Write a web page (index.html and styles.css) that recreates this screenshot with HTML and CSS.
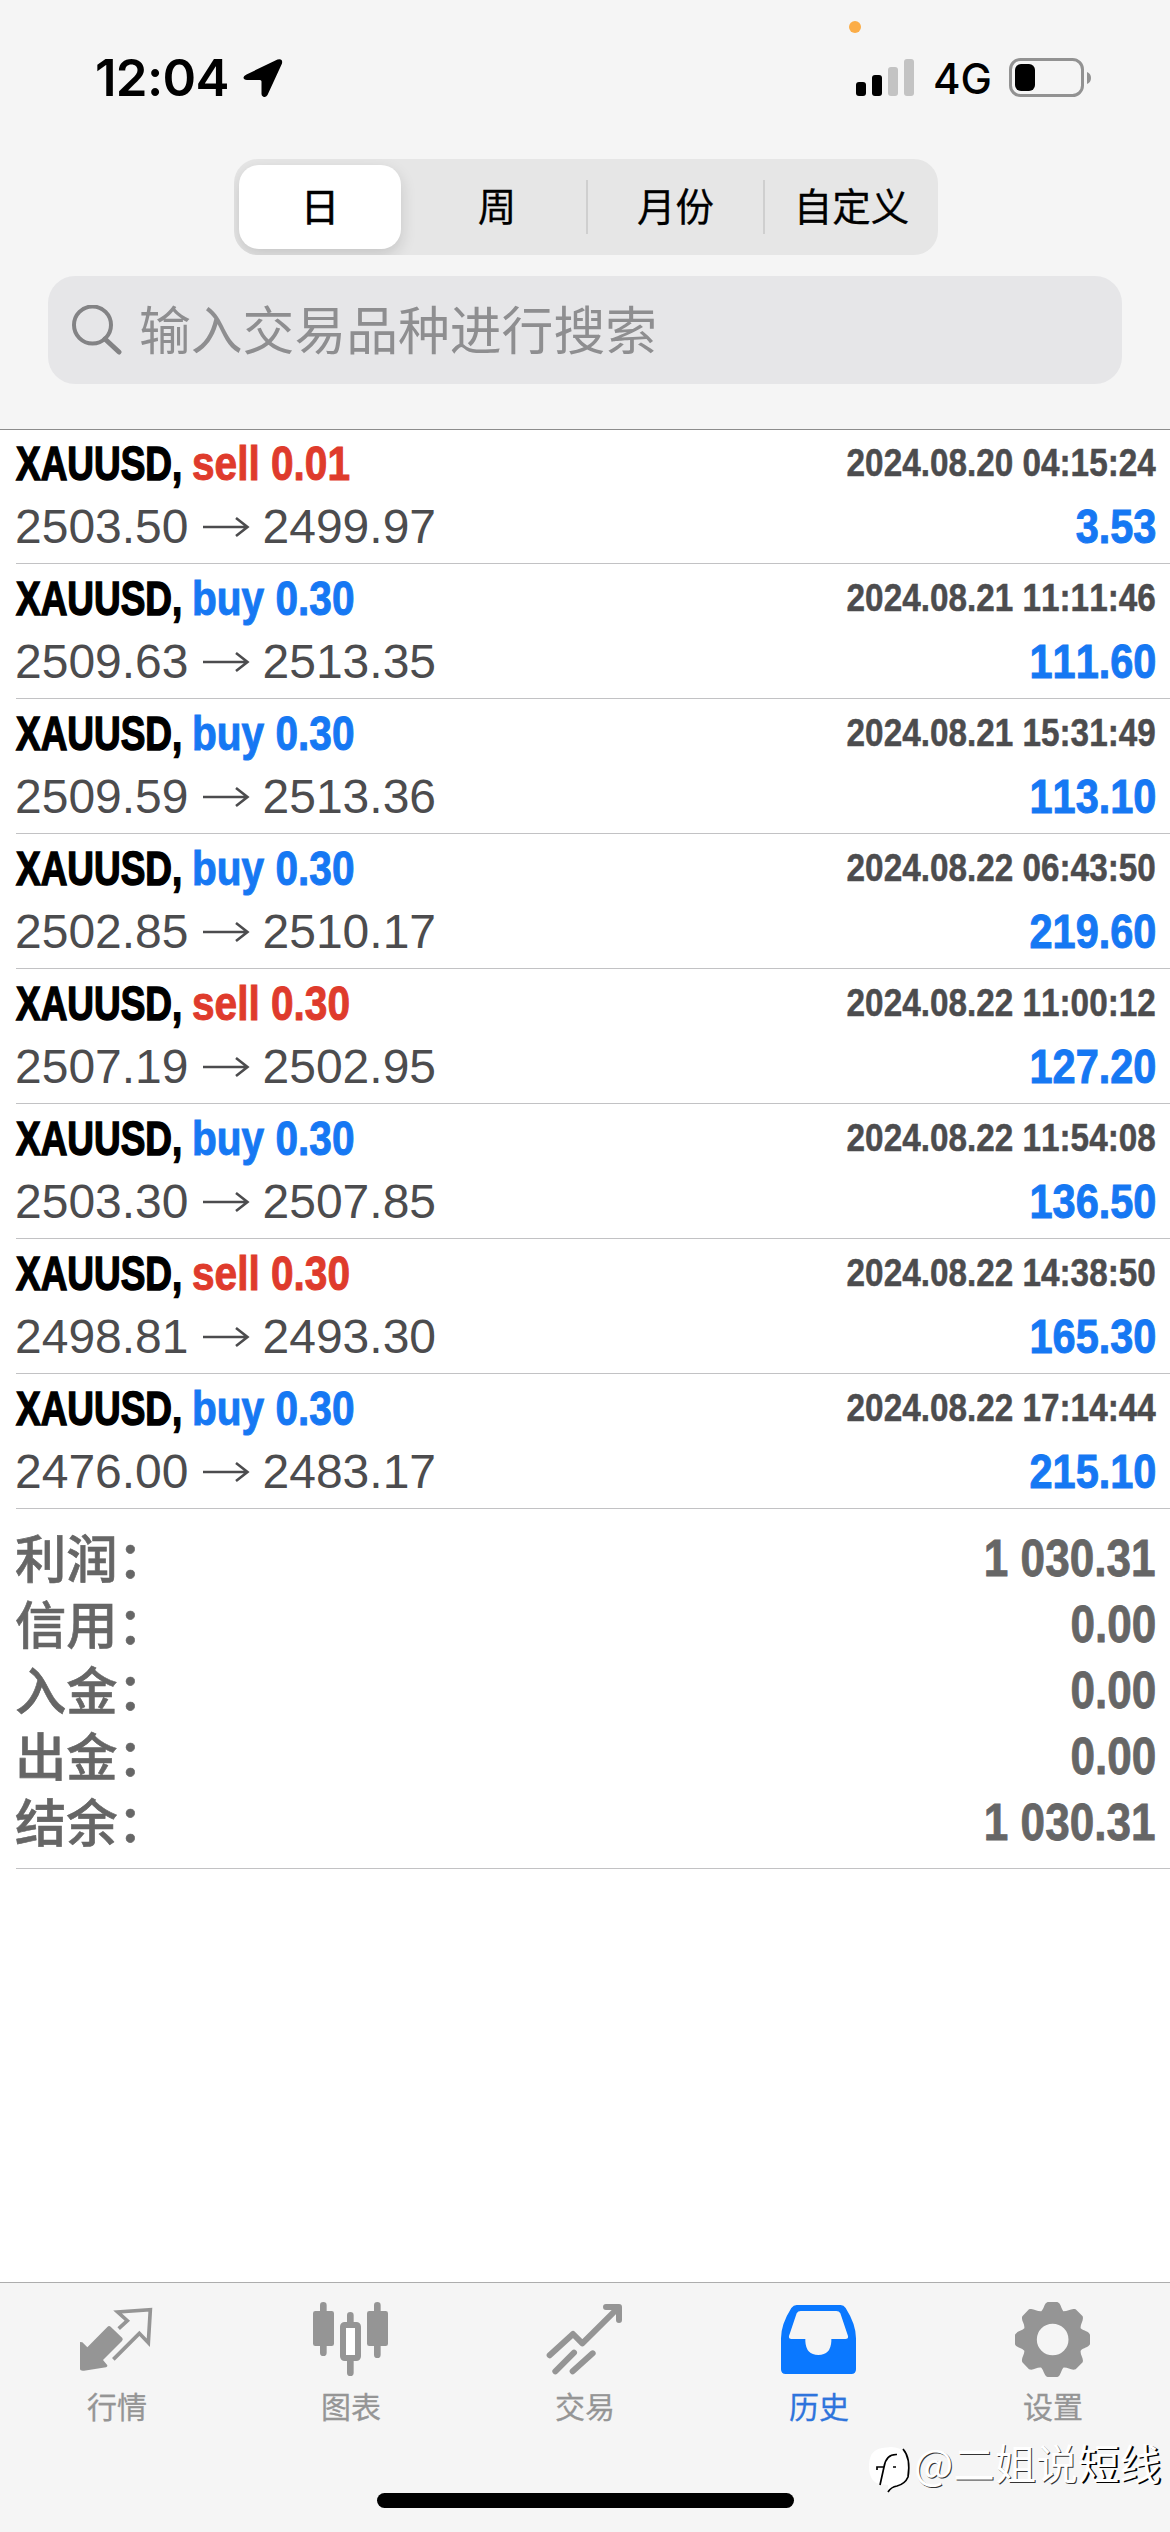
FILE: index.html
```html
<!DOCTYPE html>
<html lang="zh-CN">
<head>
<meta charset="utf-8">
<title>历史</title>
<link rel="stylesheet" href="styles.css">
</head>
<body>
<svg width="0" height="0" class="defs"><defs>
<symbol id="arrow" viewBox="0 0 48 24"><path d="M1 12H45M34 3L45.500 12L34 21" fill="none" stroke="#4c4c4e" stroke-width="2.600"/></symbol>
</defs></svg>
<div class="screen">
  <header class="top">
    <div class="status">
      <span class="rec-dot"></span>
      <span class="time">12:04</span>
      <svg class="loc" viewBox="0 0 40 40"><path d="M3.500 16.500L34.500 1.500Q40 0 39 5.500L24.500 37Q22.500 40 20 38.500Q18.500 37.500 18.500 36V23.500Q18.500 22 17 22H4Q.5 21.500 .5 19.500Q.5 18 3.500 16.500Z"/></svg>
      <svg class="signal" viewBox="0 0 58 38"><rect x="0" y="23" width="10" height="14" rx="3"/><rect x="16" y="16" width="10" height="21" rx="3"/><rect x="32" y="8" width="10" height="29" rx="3" fill="#c3c3c3"/><rect x="48" y="0" width="10" height="37" rx="3" fill="#c3c3c3"/></svg>
      <span class="net">4G</span>
      <svg class="battery" viewBox="0 0 83 40"><rect x="1.500" y="1.500" width="72" height="36" rx="10" fill="none" stroke="#929292" stroke-width="3"/><rect x="6" y="6" width="20" height="27" rx="6"/><path d="M78 14Q82 15.500 82 20T78 26Z" fill="#929292"/></svg>
    </div>
    <div class="segments">
      <div class="seg active">日</div>
      <div class="seg">周</div>
      <div class="seg ruled">月份</div>
      <div class="seg ruled">自定义</div>
    </div>
    <div class="search">
      <svg viewBox="0 0 50 50"><ellipse cx="20.500" cy="20" rx="18.500" ry="18.500" fill="none" stroke="#838385" stroke-width="4"/><path d="M33 34L47 47" stroke="#838385" stroke-width="5" stroke-linecap="round"/></svg>
      <span>输入交易品种进行搜索</span>
    </div>
  </header>

  <main>
    <ul class="deals">
      <li class="deal"><div class="line"><b class="sym">XAUUSD,</b><b class="act sell">sell 0.01</b><time>2024.08.20 04:15:24</time></div><div class="line prices"><span>2503.50</span><svg><use href="#arrow"/></svg><span>2499.97</span><b class="profit">3.53</b></div></li>
      <li class="deal"><div class="line"><b class="sym">XAUUSD,</b><b class="act buy">buy 0.30</b><time>2024.08.21 11:11:46</time></div><div class="line prices"><span>2509.63</span><svg><use href="#arrow"/></svg><span>2513.35</span><b class="profit">111.60</b></div></li>
      <li class="deal"><div class="line"><b class="sym">XAUUSD,</b><b class="act buy">buy 0.30</b><time>2024.08.21 15:31:49</time></div><div class="line prices"><span>2509.59</span><svg><use href="#arrow"/></svg><span>2513.36</span><b class="profit">113.10</b></div></li>
      <li class="deal"><div class="line"><b class="sym">XAUUSD,</b><b class="act buy">buy 0.30</b><time>2024.08.22 06:43:50</time></div><div class="line prices"><span>2502.85</span><svg><use href="#arrow"/></svg><span>2510.17</span><b class="profit">219.60</b></div></li>
      <li class="deal"><div class="line"><b class="sym">XAUUSD,</b><b class="act sell">sell 0.30</b><time>2024.08.22 11:00:12</time></div><div class="line prices"><span>2507.19</span><svg><use href="#arrow"/></svg><span>2502.95</span><b class="profit">127.20</b></div></li>
      <li class="deal"><div class="line"><b class="sym">XAUUSD,</b><b class="act buy">buy 0.30</b><time>2024.08.22 11:54:08</time></div><div class="line prices"><span>2503.30</span><svg><use href="#arrow"/></svg><span>2507.85</span><b class="profit">136.50</b></div></li>
      <li class="deal"><div class="line"><b class="sym">XAUUSD,</b><b class="act sell">sell 0.30</b><time>2024.08.22 14:38:50</time></div><div class="line prices"><span>2498.81</span><svg><use href="#arrow"/></svg><span>2493.30</span><b class="profit">165.30</b></div></li>
      <li class="deal"><div class="line"><b class="sym">XAUUSD,</b><b class="act buy">buy 0.30</b><time>2024.08.22 17:14:44</time></div><div class="line prices"><span>2476.00</span><svg><use href="#arrow"/></svg><span>2483.17</span><b class="profit">215.10</b></div></li>
    </ul>
    <dl class="summary">
      <div><dt>利润：</dt><dd>1 030.31</dd></div>
      <div><dt>信用：</dt><dd>0.00</dd></div>
      <div><dt>入金：</dt><dd>0.00</dd></div>
      <div><dt>出金：</dt><dd>0.00</dd></div>
      <div><dt>结余：</dt><dd>1 030.31</dd></div>
    </dl>
  </main>

  <footer class="bottom">
    <nav class="tabs">
      <a class="tab"><svg viewBox="234 120 234 234"><path d="M240 246L247 247L262 262L322 201Q327 195 332 200L367 234Q370 238 366 243L309 300L322 316Q323 320 318 322L252 332Q240 333 240 328Z"/><path d="M356 206L382 182L353 156L451 149L445 248L418 220L340 298" fill="none" stroke="currentColor" stroke-width="11"/></svg><span>行情</span></a>
      <a class="tab"><svg viewBox="936 120 234 234"><path d="M970 136V278M1132 136V284M1051 166V190M1051 300V338" stroke="currentColor" stroke-width="20" stroke-linecap="round"/><rect x="939" y="153" width="63" height="105" rx="7"/><rect x="1101" y="153" width="63" height="105" rx="7"/><rect x="1029" y="195" width="45" height="99" rx="5" fill="#fff" stroke="currentColor" stroke-width="18"/></svg><span>图表</span></a>
      <a class="tab"><svg viewBox="288 120 234 234"><path d="M299 286L369 222L397 250L505 143M468 141H507V180M316 334L372 278M368 334L428 280" fill="none" stroke="currentColor" stroke-width="18" stroke-linecap="round" stroke-linejoin="round"/></svg><span>交易</span></a>
      <a class="tab current"><svg viewBox="90 120 234 234"><path fill-rule="evenodd" d="M140 135H272Q281 135 287 144Q318 193 318 235V328Q318 342 304 342H107Q93 342 93 328V235Q93 193 124 144Q131 135 140 135ZM152 153Q144 153 140 160L117 228Q115 237 125 237H166V244Q168 285 205 285Q242 285 244 244V237H286Q296 237 294 228L271 160Q267 153 259 153Z"/></svg><span>历史</span></a>
      <a class="tab"><svg viewBox="792 120 234 234"><path fill-rule="evenodd" d="M893 126H922C933 130 933 145 940 154C954 154 965 143 977 148L998 169C1002 183 990 192 992 205C1002 214 1016 213 1020 224V253C1015 263 1000 263 992 272C990 287 1002 294 998 307L977 328C964 333 953 321 940 323C932 333 932 348 922 351H893C882 347 882 332 874 323C860 321 850 333 837 328L817 307C812 294 824 285 823 272C814 263 799 263 795 253V224C800 214 815 213 823 205C825 191 812 182 817 169L837 148C850 143 860 155 874 154C883 145 882 130 893 126ZM908 191A47 47 0 1 0 908 286A47 47 0 1 0 908 191Z"/></svg><span>设置</span></a>
    </nav>
    <div class="home"></div>
  </footer>
  <div class="mark"><svg viewBox="0 0 46 48"><path d="M14 2Q1 4 1 20T12 38L20 39L20 46Q25 41 31 40Q42 37 42 20Q41 2 23 1Z" fill="#fff"/><path d="M29 8.500Q18 8 16 21L12 39M9 24V21H16M25 21H28M35 3Q43 12 40 31Q37 38 29 40Q23 41 20 46" fill="none" stroke="#000" stroke-width="1.700"/></svg><span>@二姐说<em>短线</em></span></div>
</div>
</body>
</html>
```
FILE: styles.css
```css
* { box-sizing: border-box; margin: 0; padding: 0; }
body { background: #fff; font-family: "Liberation Sans", "Noto Sans CJK SC", sans-serif; color: #000; font-kerning: none; }
.defs { position: absolute; }
.screen { position: relative; width: 1170px; height: 2532px; overflow: hidden; display: flex; flex-direction: column; background: #fff; }

.top { height: 430px; background: #f5f5f5; border-bottom: 1px solid #8c8c8c; }
.status { position: relative; height: 159px; padding: 58px 78px 0 95px; display: flex; align-items: flex-start; }
.rec-dot { position: absolute; left: 849px; top: 21px; width: 12px; height: 12px; border-radius: 50%; background: #fbad48; }
.time { width: 148px; font: 600 51px/40px Inter, sans-serif; letter-spacing: -.7px; white-space: nowrap; }
.loc { width: 40px; height: 40px; }
.signal { width: 58px; height: 38px; margin: 1px 19px 0 573px; }
.net { width: 76px; font: 500 42px/42px Inter, sans-serif; }
.battery { width: 83px; height: 40px; }

.segments { width: 704px; height: 96px; margin: 0 0 0 234px; border-radius: 24px; background: #e6e6e6; display: grid; grid-template-columns: 174px 178px 177px 175px; align-items: center; overflow: hidden; }
.seg { text-align: center; height: 54px; font: 400 38.500px/48px "Noto Sans CJK SC", sans-serif; -webkit-text-stroke: .3px #000; }
.seg.active { height: 84px; margin: 0 7px 0 5px; line-height: 78px; -webkit-text-stroke: .7px #000; background: #fff; border-radius: 20px; box-shadow: 0 6px 16px rgba(0,0,0,.14); }
.seg.ruled { border-left: 2px solid #cfcfcf; }

.search { height: 108px; margin: 21px 48px 0; padding-left: 24px; border-radius: 27px; background: #e6e6e8; display: flex; align-items: center; gap: 17px; font: 400 51.800px/60px "Noto Sans CJK SC", sans-serif; color: #8e8e90; }
.search svg { width: 50px; height: 50px; }
.search span { margin-top: -4px; }

.deals { list-style: none; padding-left: 16px; }
.deal { height: 135px; padding-top: 1px; border-bottom: 1px solid #c2c2c4; }
.deal:first-child { height: 134px; padding-top: 0; }
.line { height: 66px; padding-right: 14px; display: flex; align-items: center; white-space: nowrap; font-size: 48.500px; line-height: 66px; }
.sym { width: 176px; transform: scaleX(.762); transform-origin: 0 50%; -webkit-text-stroke: 1.500px currentColor; }
.act { transform: scaleX(.837); transform-origin: 0 50%; -webkit-text-stroke: 1px currentColor; }
.sell { color: #df3b2c; }
.buy { color: #1678f3; }
time { margin-left: auto; font-size: 39.500px; line-height: 62px; padding-bottom: 2px; font-weight: 700; color: #4c4c4e; -webkit-text-stroke: .5px currentColor; transform: scaleX(.843); transform-origin: 100% 50%; }
.prices { height: 62px; font-size: 48px; line-height: 62px; color: #4c4c4e; }
.prices span:first-child { margin-left: -1px; }
.prices svg { width: 48px; height: 24px; margin: 0 13px; }
.profit { margin-left: auto; padding-bottom: 3px; color: #1678f3; font-size: 48.500px; -webkit-text-stroke: 1px currentColor; transform: scaleX(.855); transform-origin: 100% 50%; }

.summary { margin-left: 16px; padding: 17px 14px 12px 0; height: 360px; border-bottom: 1px solid #c2c2c4; color: #666; font-weight: 700; }
.summary div { height: 66px; display: flex; justify-content: space-between; }
.summary dt { font: 500 51.300px/60px "Noto Sans CJK SC", sans-serif; margin-left: -1px; -webkit-text-stroke: .6px currentColor; }
.summary dd { font-size: 51px; line-height: 66px; -webkit-text-stroke: .8px currentColor; transform: scaleX(.865); transform-origin: 100% 50%; }

.bottom { margin-top: auto; height: 250px; background: #f5f5f5; border-top: 1px solid #adadad; }
.tabs { height: 210px; display: grid; grid-template-columns: repeat(5, 1fr); }
.tab { display: flex; flex-direction: column; align-items: center; padding-top: 17px; color: #959595; }
.tab svg { width: 78px; height: 78px; fill: currentColor; }
.tab span { margin-top: 6px; font: 400 30px/42px "Noto Sans CJK SC", sans-serif; -webkit-text-stroke: .3px currentColor; }
.tab.current { color: #0a78ff; }
.tab.current span { color: #2e74dc; }
.home { width: 417px; height: 15px; margin-left: 377px; border-radius: 8px; background: #000; }
.mark { position: absolute; left: 868px; top: 2446px; display: flex; font: 400 41.500px/32px "Noto Sans CJK SC", sans-serif; color: #fff; text-shadow: 1px 1px 0 #333; white-space: nowrap; }
.mark svg { width: 46px; height: 48px; }
.mark em { font-style: normal; text-shadow: 2px 1px 0 #000; }
```
